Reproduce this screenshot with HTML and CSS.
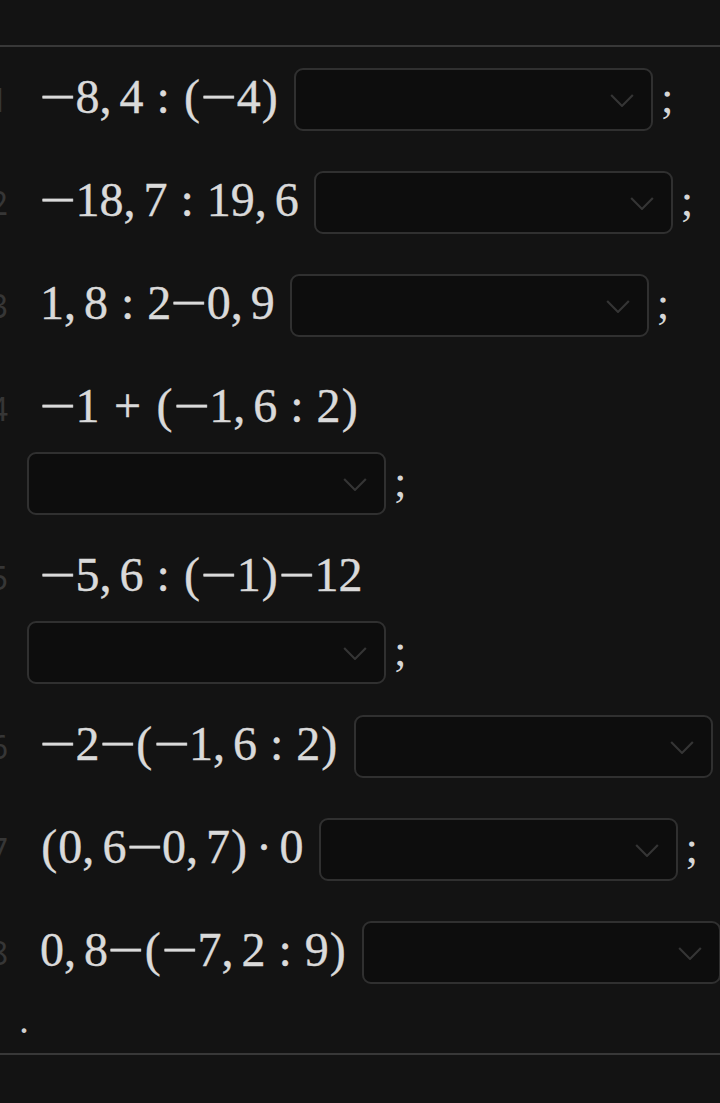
FILE: index.html
```html
<!DOCTYPE html>
<html lang="ru">
<head>
<meta charset="utf-8">
<title>Задания</title>
<link rel="stylesheet" href="styles.css">
</head>
<body>
<div class="page">
  <div class="rule rule-top"></div>
  <ol class="tasks">
    <li class="task">
      <span class="num">1</span>
      <span class="expr"><span class="m"><i>−</i></span>8<span class="c">,</span>4<span class="rel">:</span><span class="p">(</span><span class="m"><i>−</i></span>4<span class="p">)</span></span>
      <span class="select"><svg class="chev" viewBox="0 0 22 12"><path d="M1 1 L11 11 L21 1"/></svg></span>
      <span class="semi">;</span>
    </li>
    <li class="task">
      <span class="num">2</span>
      <span class="expr"><span class="m"><i>−</i></span>18<span class="c">,</span>7<span class="rel">:</span>19<span class="c">,</span>6</span>
      <span class="select"><svg class="chev" viewBox="0 0 22 12"><path d="M1 1 L11 11 L21 1"/></svg></span>
      <span class="semi">;</span>
    </li>
    <li class="task">
      <span class="num">3</span>
      <span class="expr">1<span class="c">,</span>8<span class="rel">:</span>2<span class="m"><i>−</i></span>0<span class="c">,</span>9</span>
      <span class="select"><svg class="chev" viewBox="0 0 22 12"><path d="M1 1 L11 11 L21 1"/></svg></span>
      <span class="semi">;</span>
    </li>
    <li class="task stacked">
      <div class="line">
        <span class="num">4</span>
        <span class="expr"><span class="m"><i>−</i></span>1<span class="bin">+</span><span class="p">(</span><span class="m"><i>−</i></span>1<span class="c">,</span>6<span class="rel">:</span>2<span class="p">)</span></span>
      </div>
      <div class="line line-sel">
        <span class="select"><svg class="chev" viewBox="0 0 22 12"><path d="M1 1 L11 11 L21 1"/></svg></span>
        <span class="semi">;</span>
      </div>
    </li>
    <li class="task stacked">
      <div class="line">
        <span class="num">5</span>
        <span class="expr"><span class="m"><i>−</i></span>5<span class="c">,</span>6<span class="rel">:</span><span class="p">(</span><span class="m"><i>−</i></span>1<span class="p">)</span><span class="m"><i>−</i></span>12</span>
      </div>
      <div class="line line-sel">
        <span class="select"><svg class="chev" viewBox="0 0 22 12"><path d="M1 1 L11 11 L21 1"/></svg></span>
        <span class="semi">;</span>
      </div>
    </li>
    <li class="task">
      <span class="num">6</span>
      <span class="expr"><span class="m"><i>−</i></span>2<span class="m"><i>−</i></span><span class="p">(</span><span class="m"><i>−</i></span>1<span class="c">,</span>6<span class="rel">:</span>2<span class="p">)</span></span>
      <span class="select"><svg class="chev" viewBox="0 0 22 12"><path d="M1 1 L11 11 L21 1"/></svg></span>
      <span class="semi">;</span>
    </li>
    <li class="task">
      <span class="num">7</span>
      <span class="expr"><span class="p">(</span>0<span class="c">,</span>6<span class="m"><i>−</i></span>0<span class="c">,</span>7<span class="p">)</span><span class="bin bin-dot">·</span>0</span>
      <span class="select"><svg class="chev" viewBox="0 0 22 12"><path d="M1 1 L11 11 L21 1"/></svg></span>
      <span class="semi">;</span>
    </li>
    <li class="task task-last">
      <span class="num">8</span>
      <span class="expr">0<span class="c">,</span>8<span class="m"><i>−</i></span><span class="p">(</span><span class="m"><i>−</i></span>7<span class="c">,</span>2<span class="rel">:</span>9<span class="p">)</span></span>
      <span class="select"><svg class="chev" viewBox="0 0 22 12"><path d="M1 1 L11 11 L21 1"/></svg></span>
    </li>
  </ol>
  <div class="end-dot">.</div>
  <div class="rule rule-bottom"></div>
</div>
</body>
</html>
```

FILE: styles.css
```css
html, body {
  margin: 0;
  padding: 0;
  background: #131313;
  overflow: hidden;
}

.page {
  width: 720px;
  height: 1103px;
  overflow: hidden;
  padding-top: 45px;
  box-sizing: border-box;
}

.rule {
  height: 2px;
  background: #383838;
}

.tasks {
  list-style: none;
  margin: 0;
  padding: 21px 0 0 0;
}

.task {
  display: flex;
  align-items: center;
  height: 63px;
  margin-bottom: 40px;
  white-space: nowrap;
}

.task.task-last {
  margin-bottom: 0;
}

.task.stacked {
  display: block;
  height: auto;
  margin-bottom: 31px;
}

.line {
  display: flex;
  align-items: center;
  height: 63px;
  white-space: nowrap;
}

.line-sel {
  margin-top: 12px;
  padding-left: 27px;
}

.num {
  flex: none;
  width: 30px;
  margin-left: -22px;
  margin-right: 32px;
  text-align: right;
  font-family: "Noto Sans", sans-serif;
  font-size: 32px;
  color: #363636;
}

.expr {
  flex: none;
  font-family: "Liberation Serif", serif;
  font-size: 48px;
  color: #dadada;
  margin-right: 15px;
  padding-bottom: 6px;
  -webkit-text-stroke: 0.4px #dadada;
}

.m {
  display: inline-block;
  width: 0.74em;
  text-align: center;
}

.m i {
  font-style: normal;
  display: inline-block;
  transform: scaleX(1.35);
}

.p {
  margin: 0 0.025em;
}

.c {
  margin-right: 0.167em;
}

.rel {
  margin: 0 0.27em;
}

.bin {
  margin: 0 0.3em;
}

.bin.bin-dot {
  margin: 0 0.16em;
}

.select {
  flex: none;
  box-sizing: border-box;
  width: 359px;
  height: 63px;
  border: 2px solid #303030;
  border-radius: 9px;
  background: #0d0d0d;
  display: flex;
  align-items: center;
  justify-content: flex-end;
  padding-right: 17px;
}

.chev {
  width: 24px;
  height: 13px;
  margin-top: 2px;
}

.chev path {
  fill: none;
  stroke: #353535;
  stroke-width: 2;
}

.semi {
  flex: none;
  margin-left: 8px;
  font-family: "Liberation Serif", serif;
  font-size: 45px;
  color: #d6d6d6;
  padding-bottom: 6px;
}

.end-dot {
  height: 69px;
  padding-left: 19px;
  font-family: "Liberation Serif", serif;
  font-size: 40px;
  line-height: 71px;
  color: #d0d0d0;
  overflow: hidden;
}
```
